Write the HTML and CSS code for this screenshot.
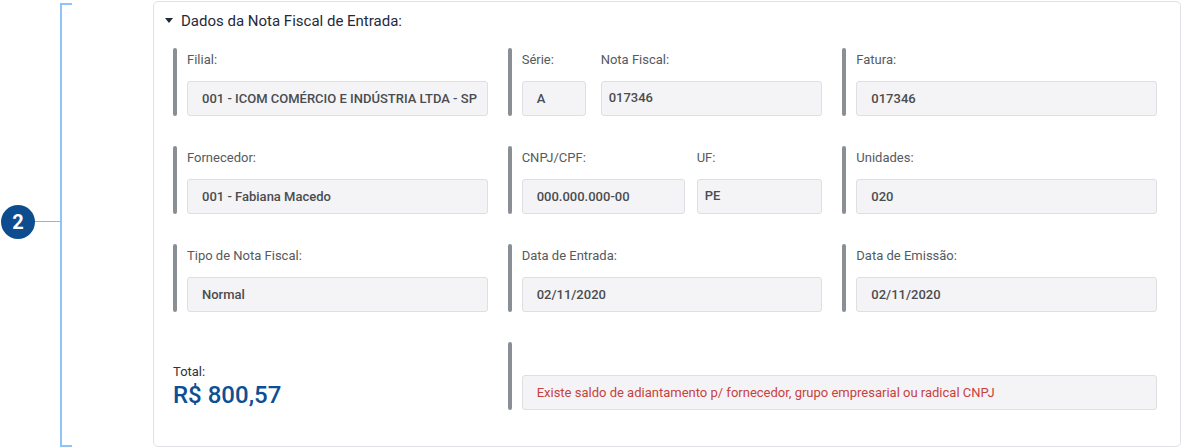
FILE: index.html
```html
<!DOCTYPE html>
<html lang="pt-BR">
<head>
<meta charset="utf-8">
<title>Dados da Nota Fiscal de Entrada</title>
<link rel="stylesheet" href="styles.css">
</head>
<body>
<div class="page">
  <div class="annot">
    <div class="badge">2</div>
    <div class="connector"></div>
    <div class="bracket"></div>
  </div>
  <section class="card">
    <header class="card-head">
      <svg class="caret" width="8" height="5" viewBox="0 0 8 5"><polygon points="0,0 8,0 4,5" fill="#1f2a3c"/></svg>
      <span class="card-title">Dados da Nota Fiscal de Entrada:</span>
    </header>
    <div class="grid">
      <div class="group">
        <div class="bar"></div>
        <div class="fields">
          <div class="field grow">
            <div class="label">Filial:</div>
            <div class="input">001 - ICOM COMÉRCIO E INDÚSTRIA LTDA - SP</div>
          </div>
        </div>
      </div>
      <div class="group">
        <div class="bar"></div>
        <div class="fields">
          <div class="field serie">
            <div class="label">Série:</div>
            <div class="input">A</div>
          </div>
          <div class="field grow">
            <div class="label">Nota Fiscal:</div>
            <div class="input tight">017346</div>
          </div>
        </div>
      </div>
      <div class="group">
        <div class="bar"></div>
        <div class="fields">
          <div class="field grow">
            <div class="label">Fatura:</div>
            <div class="input">017346</div>
          </div>
        </div>
      </div>

      <div class="group">
        <div class="bar"></div>
        <div class="fields">
          <div class="field grow">
            <div class="label">Fornecedor:</div>
            <div class="input">001 - Fabiana Macedo</div>
          </div>
        </div>
      </div>
      <div class="group">
        <div class="bar"></div>
        <div class="fields gap12">
          <div class="field cnpj">
            <div class="label">CNPJ/CPF:</div>
            <div class="input">000.000.000-00</div>
          </div>
          <div class="field grow">
            <div class="label">UF:</div>
            <div class="input tight">PE</div>
          </div>
        </div>
      </div>
      <div class="group">
        <div class="bar"></div>
        <div class="fields">
          <div class="field grow">
            <div class="label">Unidades:</div>
            <div class="input">020</div>
          </div>
        </div>
      </div>

      <div class="group">
        <div class="bar"></div>
        <div class="fields">
          <div class="field grow">
            <div class="label">Tipo de Nota Fiscal:</div>
            <div class="input">Normal</div>
          </div>
        </div>
      </div>
      <div class="group">
        <div class="bar"></div>
        <div class="fields">
          <div class="field grow">
            <div class="label">Data de Entrada:</div>
            <div class="input">02/11/2020</div>
          </div>
        </div>
      </div>
      <div class="group">
        <div class="bar"></div>
        <div class="fields">
          <div class="field grow">
            <div class="label">Data de Emissão:</div>
            <div class="input">02/11/2020</div>
          </div>
        </div>
      </div>

      <div class="total">
        <div class="label">Total:</div>
        <div class="total-value">R$ 800,57</div>
      </div>
      <div class="group span2">
        <div class="bar"></div>
        <div class="fields">
          <div class="field grow">
            <div class="label"></div>
            <div class="input warn">Existe saldo de adiantamento p/ fornecedor, grupo empresarial ou radical CNPJ</div>
          </div>
        </div>
      </div>
    </div>
  </section>
</div>
</body>
</html>
```

FILE: styles.css
```css
* { box-sizing: border-box; }
html, body { margin: 0; padding: 0; background: #fff; }
body {
  font-family: Roboto, "Liberation Sans", Arial, sans-serif;
  color: #333;
}
.page {
  display: flex;
  align-items: flex-start;
  padding-top: 1px;
  width: 1182px;
  height: 448px;
  overflow: hidden;
}
.annot {
  width: 153px;
  flex: none;
  display: flex;
  align-items: flex-start;
  padding-left: 1px;
}
.badge {
  width: 34px;
  height: 34px;
  margin-top: 204px;
  border-radius: 50%;
  background: #0d4c8f;
  color: #fff;
  font-weight: 700;
  font-size: 20px;
  line-height: 34px;
  text-align: center;
  flex: none;
}
.connector {
  width: 25px;
  height: 1px;
  margin-top: 220px;
  background: #7fb8f5;
  flex: none;
}
.bracket {
  width: 12px;
  height: 444px;
  margin-top: 2px;
  border: 2px solid #8fc3f9;
  border-right: none;
  flex: none;
}
.card {
  width: 1028px;
  height: 446px;
  border: 1px solid #dfe2e6;
  border-radius: 5px;
  background: #fff;
  padding-top: 9px;
}
.card-head {
  display: flex;
  align-items: center;
  gap: 8px;
  padding-left: 11px;
  height: 20px;
}
.caret { display: block; margin-top: -1px; }
.card-title {
  font-size: 15px;
  line-height: 20px;
  color: #1f2a3c;
}
.grid {
  display: grid;
  grid-template-columns: repeat(3, 1fr);
  column-gap: 20px;
  row-gap: 30px;
  padding: 17px 23px 0 19px;
}
.group {
  display: flex;
  height: 68px;
}
.span2 { grid-column: span 2; }
.bar {
  width: 4px;
  flex: none;
  border-radius: 2px;
  background: #8a8f96;
}
.fields {
  flex: 1;
  display: flex;
  gap: 15px;
  margin-left: 10px;
  padding-top: 4px;
  min-width: 0;
}
.fields.gap12 { gap: 12px; }
.field { display: flex; flex-direction: column; min-width: 0; }
.field.grow { flex: 1; }
.field.serie { width: 64px; flex: none; }
.field.cnpj { width: 163px; flex: none; }
.label {
  font-size: 13px;
  line-height: 16px;
  height: 16px;
  color: #555a60;
  margin-bottom: 13px;
}
.input {
  height: 35px;
  border: 1px solid #dcdfe3;
  border-radius: 3px;
  background: #f4f4f6;
  padding: 0 0 0 14px;
  font-size: 13px;
  font-weight: 500;
  line-height: 34px;
  color: #4a4c50;
  white-space: nowrap;
  overflow: hidden;
}
.input.tight { padding-left: 7px; line-height: 31px; }
.input.warn {
  color: #c8413f;
  font-weight: 400;
}
.total {
  align-self: end;
  padding-bottom: 1px;
}
.total .label { margin-bottom: 1px; color: #333; }
.total-value {
  font-size: 24px;
  line-height: 28px;
  font-weight: 500;
  color: #0d4f95;
}
```
